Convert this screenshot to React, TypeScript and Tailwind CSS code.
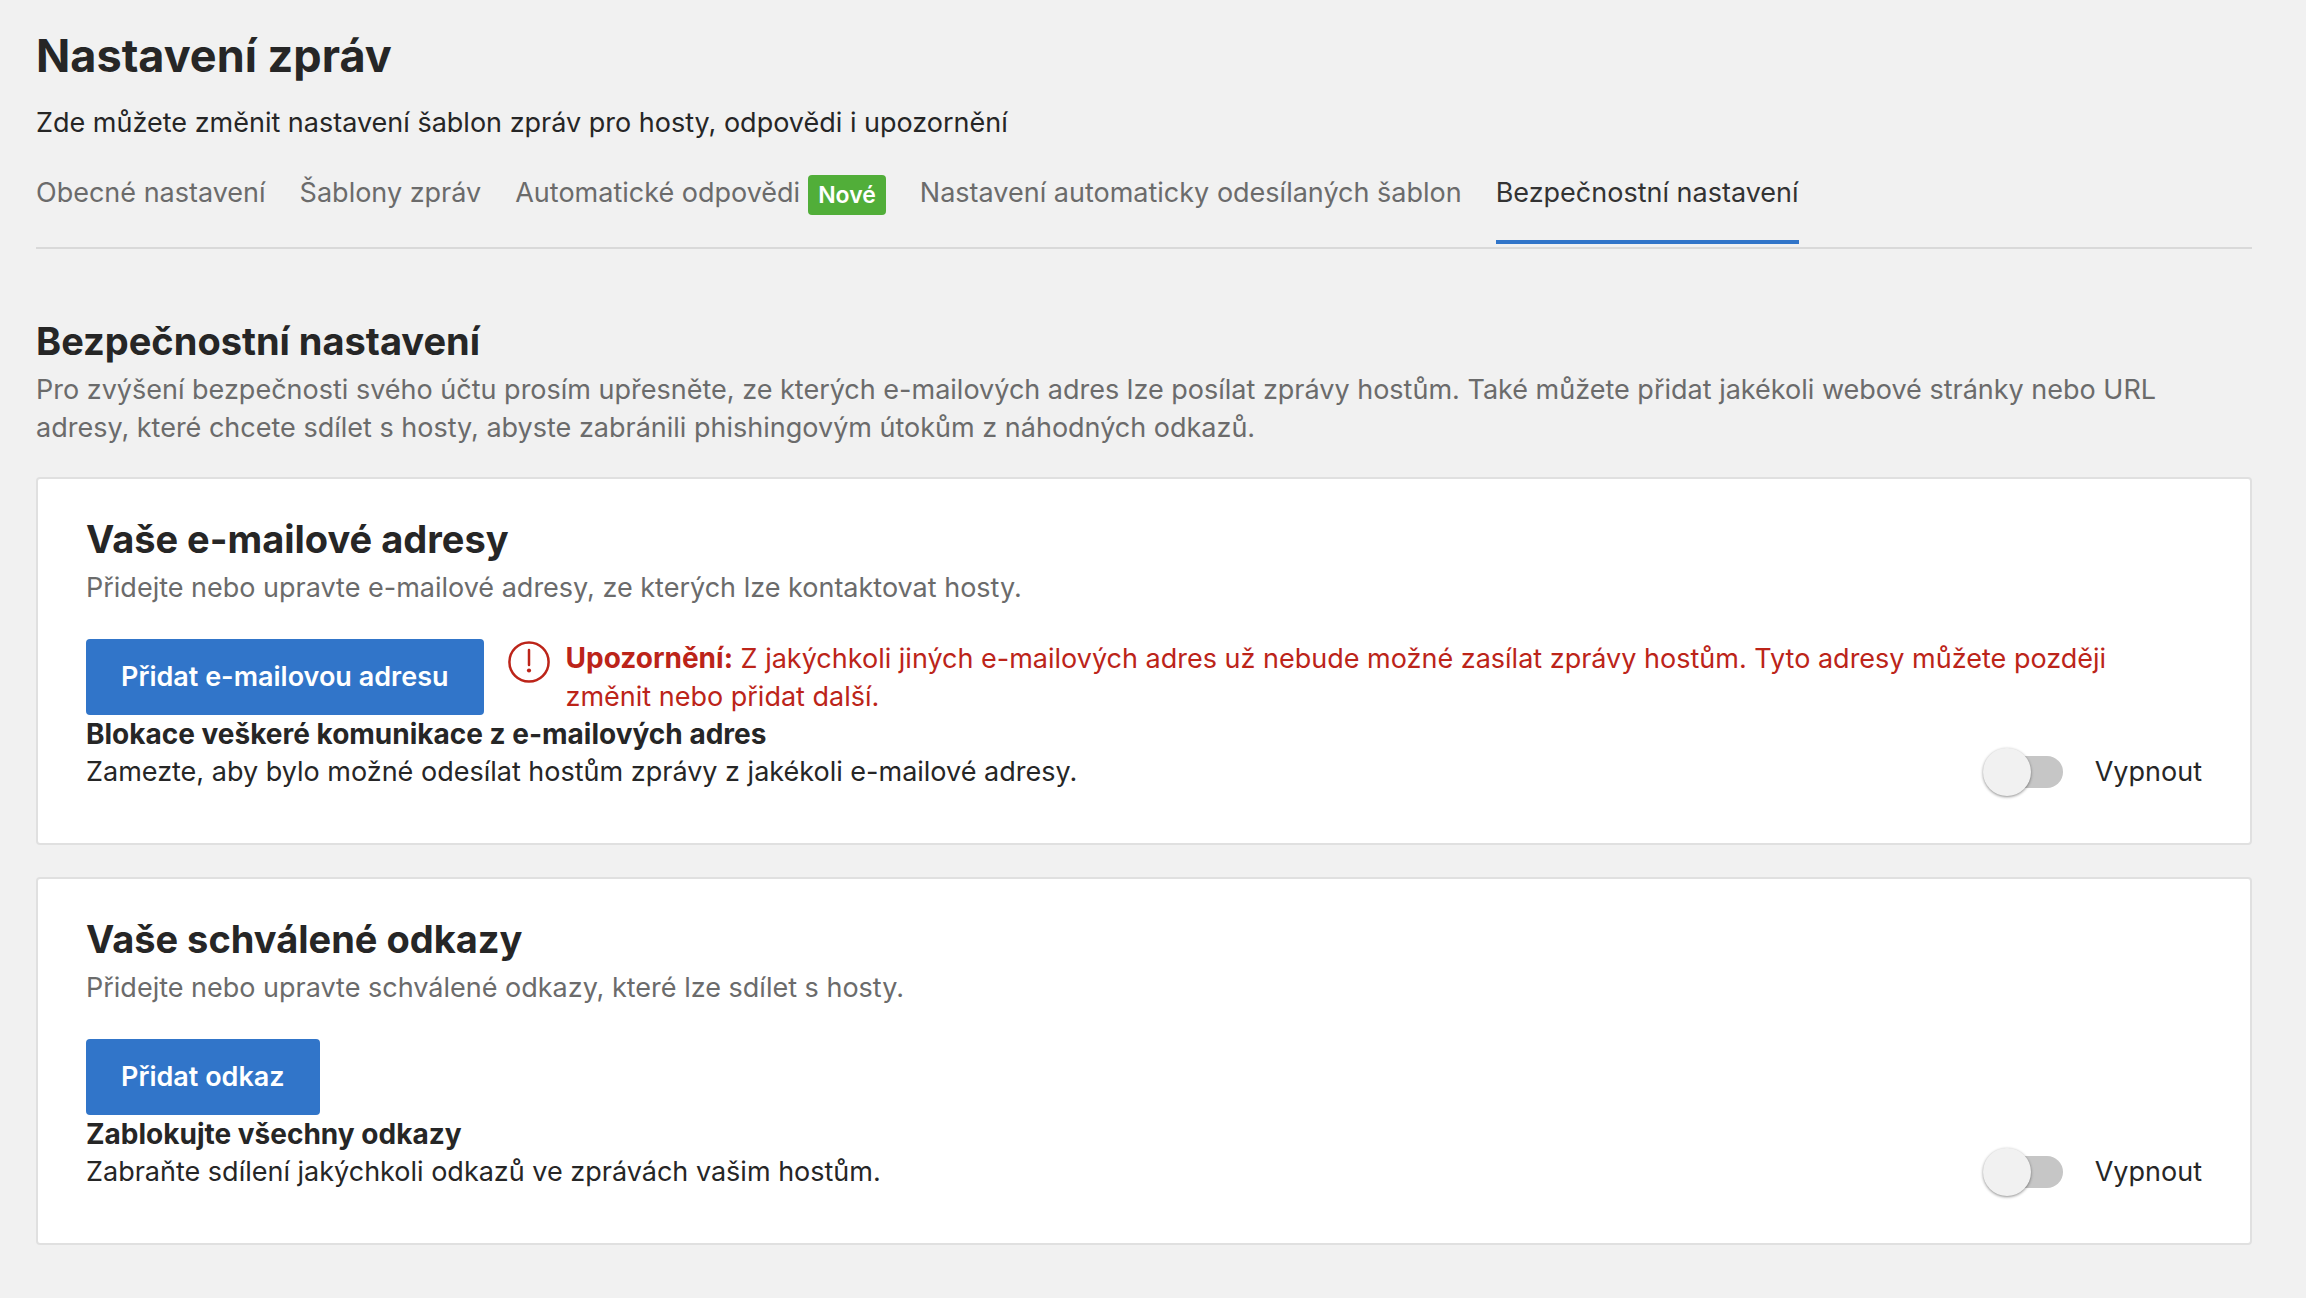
import React from "react";

function Tab({ children, active = false }: { children: React.ReactNode; active?: boolean }) {
  return (
    <a
      href="#"
      aria-current={active ? "page" : undefined}
      className={
        active
          ? "flex h-[70px] items-start border-b-4 border-[#3175c9] text-[#333333]"
          : "flex h-[70px] items-start gap-2 text-[#6b6b6b]"
      }
    >
      {children}
    </a>
  );
}

function Toggle({ id }: { id: string }) {
  return (
    <label htmlFor={id} className="flex h-[38px] cursor-pointer items-center gap-8">
      <span className="relative flex h-12 w-20 items-center">
        <input id={id} type="checkbox" role="switch" className="peer sr-only" />
        <span className="ml-4 h-8 w-16 rounded-full bg-[#c6c6c6]" />
        <span className="absolute left-0 size-12 rounded-full bg-[#f1f1f1] shadow-[0_1px_3px_rgba(0,0,0,0.45)] peer-checked:left-8" />
      </span>
      Vypnout
    </label>
  );
}

function Card({
  title,
  text,
  button,
  warning,
  blockTitle,
  blockText,
  id,
}: {
  title: string;
  text: string;
  button: string;
  warning?: React.ReactNode;
  blockTitle: string;
  blockText: string;
  id: string;
}) {
  return (
    <section className="rounded border-2 border-[#e0e0e0] bg-white px-12 pt-9 pb-[52px]">
      <h3 className="text-[38px] leading-12 font-bold">{title}</h3>
      <p className="mt-1.5 text-[#6b6b6b]">{text}</p>
      <div className="mt-8 flex items-start gap-6">
        <button type="button" className="h-[76px] shrink-0 rounded bg-[#3175c9] px-[35px] font-semibold text-white">
          {button}
        </button>
        {warning}
      </div>
      <div className="flex items-end justify-between">
        <div>
          <h4 className="text-[28px] leading-[38px] font-bold">{blockTitle}</h4>
          <p>{blockText}</p>
        </div>
        <Toggle id={id} />
      </div>
    </section>
  );
}

export default function App() {
  return (
    <main className="min-h-screen bg-[#f1f1f1] pt-7 pr-[54px] pb-12 pl-9 font-['Inter',sans-serif] text-[27px] leading-[38px] text-[#262626]">
      <h1 className="text-[45px] leading-14 font-bold">Nastavení zpráv</h1>
      <p className="mt-5">Zde můžete změnit nastavení šablon zpráv pro hosty, odpovědi i upozornění</p>
      <nav className="mt-8 flex gap-[34px] border-b-2 border-[#d9d9d9] pb-[3px]">
        <Tab>Obecné nastavení</Tab>
        <Tab>Šablony zpráv</Tab>
        <Tab>
          Automatické odpovědi
          <span className="mt-px rounded bg-[#51ae39] px-2.5 text-[23px] leading-10 font-semibold text-white">Nové</span>
        </Tab>
        <Tab>Nastavení automaticky odesílaných šablon</Tab>
        <Tab active>Bezpečnostní nastavení</Tab>
      </nav>
      <h2 className="mt-17 text-[38px] leading-12 font-bold">Bezpečnostní nastavení</h2>
      <p className="mt-1.5 text-[#6b6b6b]">
        Pro zvýšení bezpečnosti svého účtu prosím upřesněte, ze kterých e-mailových adres lze posílat zprávy hostům. Také
        můžete přidat jakékoli webové stránky nebo URL adresy, které chcete sdílet s hosty, abyste zabránili phishingovým
        útokům z náhodných odkazů.
      </p>
      <div className="mt-[30px] flex flex-col gap-8">
        <Card
          id="block-mail"
          title="Vaše e-mailové adresy"
          text="Přidejte nebo upravte e-mailové adresy, ze kterých lze kontaktovat hosty."
          button="Přidat e-mailovou adresu"
          blockTitle="Blokace veškeré komunikace z e-mailových adres"
          blockText="Zamezte, aby bylo možné odesílat hostům zprávy z jakékoli e-mailové adresy."
          warning={
            <div className="flex gap-4 pt-px pr-8 text-[#bc2419]">
              <svg viewBox="0 0 42 42" className="mt-px size-[42px] shrink-0" fill="none" stroke="currentColor" strokeWidth="2.5" aria-hidden="true">
                <circle cx="21" cy="21" r="19.6" />
                <path d="M21 9v15" strokeLinecap="round" />
                <circle cx="21" cy="29.5" r="2.1" fill="currentColor" stroke="none" />
              </svg>
              <p className="-mb-px">
                <b className="text-[28px] leading-none">Upozornění:</b> Z jakýchkoli jiných e-mailových adres už nebude
                možné zasílat zprávy hostům. Tyto adresy můžete později změnit nebo přidat další.
              </p>
            </div>
          }
        />
        <Card
          id="block-links"
          title="Vaše schválené odkazy"
          text="Přidejte nebo upravte schválené odkazy, které lze sdílet s hosty."
          button="Přidat odkaz"
          blockTitle="Zablokujte všechny odkazy"
          blockText="Zabraňte sdílení jakýchkoli odkazů ve zprávách vašim hostům."
        />
      </div>
    </main>
  );
}
